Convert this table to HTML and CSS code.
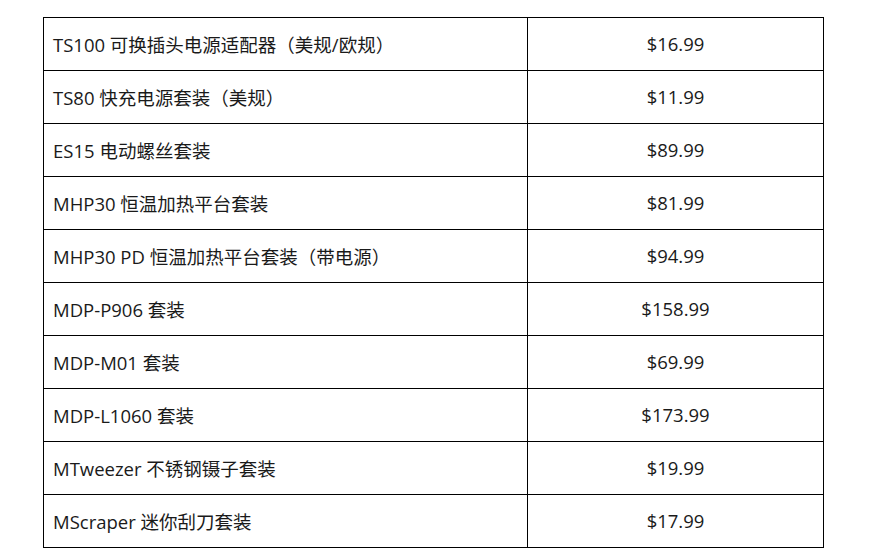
FILE: index.html
```html
<!DOCTYPE html>
<html lang="zh">
<head>
<meta charset="utf-8">
<link rel="stylesheet" href="styles.css">
</head>
<body>
<div class="wrap">
<table class="price-table">
<tbody>
<tr><td class="name">TS100 可换插头电源适配器（美规/欧规）</td><td class="price">$16.99</td></tr>
<tr><td class="name">TS80 快充电源套装（美规）</td><td class="price">$11.99</td></tr>
<tr><td class="name">ES15 电动螺丝套装</td><td class="price">$89.99</td></tr>
<tr><td class="name">MHP30 恒温加热平台套装</td><td class="price">$81.99</td></tr>
<tr><td class="name">MHP30 PD 恒温加热平台套装（带电源）</td><td class="price">$94.99</td></tr>
<tr><td class="name">MDP-P906 套装</td><td class="price">$158.99</td></tr>
<tr><td class="name">MDP-M01 套装</td><td class="price">$69.99</td></tr>
<tr><td class="name">MDP-L1060 套装</td><td class="price">$173.99</td></tr>
<tr><td class="name">MTweezer 不锈钢镊子套装</td><td class="price">$19.99</td></tr>
<tr><td class="name">MScraper 迷你刮刀套装</td><td class="price">$17.99</td></tr>
</tbody>
</table>
</div>
</body>
</html>
```

FILE: styles.css
```css
html, body {
  margin: 0;
  padding: 0;
  background: #ffffff;
}
.wrap {
  padding: 17px 0 0 43px;
}
.price-table {
  border-collapse: collapse;
  width: 781px;
  table-layout: fixed;
  font-family: "Open Sans", "Noto Sans CJK SC", sans-serif;
  font-size: 18.5px;
  color: #1a1a1a;
}
.price-table td {
  border: 1px solid #000;
  height: 53px;
  padding: 0 0 1px 0;
  box-sizing: border-box;
  vertical-align: middle;
}
.name {
  width: 484px;
  padding-left: 9px !important;
  text-align: left;
}
.price {
  text-align: center;
}
```
